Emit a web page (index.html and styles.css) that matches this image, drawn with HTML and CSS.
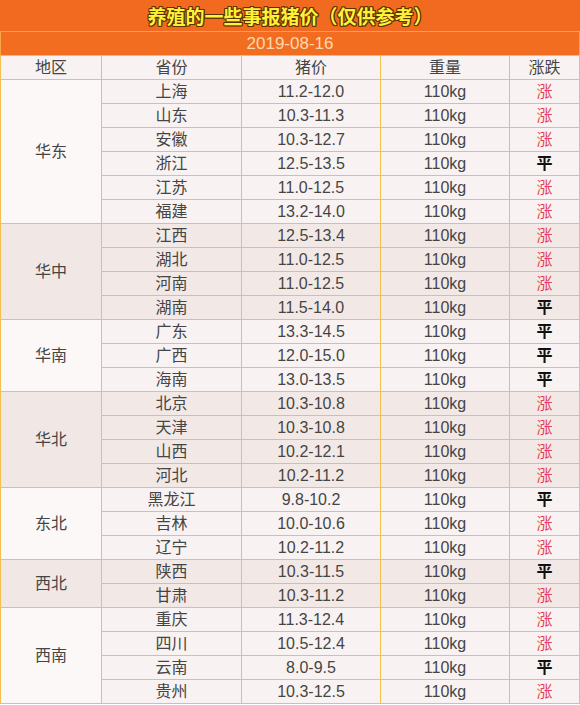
FILE: index.html
```html
<!DOCTYPE html>
<html lang="zh">
<head>
<meta charset="utf-8">
<link rel="stylesheet" href="styles.css">
</head>
<body>
<div class="page">
  <div class="title"><span>养殖的一些事报猪价（仅供参考）</span></div>
  <table class="prices">
    <colgroup>
      <col class="c1"><col class="c2"><col class="c3"><col class="c4"><col class="c5">
    </colgroup>
    <tr class="date"><td colspan="5">2019-08-16</td></tr>
    <tr class="head"><td>地区</td><td>省份</td><td>猪价</td><td>重量</td><td>涨跌</td></tr>

    <tr class="g1"><td class="region" rowspan="6">华东</td><td>上海</td><td>11.2-12.0</td><td>110kg</td><td class="up">涨</td></tr>
    <tr class="g1"><td>山东</td><td>10.3-11.3</td><td>110kg</td><td class="up">涨</td></tr>
    <tr class="g1"><td>安徽</td><td>10.3-12.7</td><td>110kg</td><td class="up">涨</td></tr>
    <tr class="g1"><td>浙江</td><td>12.5-13.5</td><td>110kg</td><td class="flat">平</td></tr>
    <tr class="g1"><td>江苏</td><td>11.0-12.5</td><td>110kg</td><td class="up">涨</td></tr>
    <tr class="g1"><td>福建</td><td>13.2-14.0</td><td>110kg</td><td class="up">涨</td></tr>

    <tr class="g2"><td class="region" rowspan="4">华中</td><td>江西</td><td>12.5-13.4</td><td>110kg</td><td class="up">涨</td></tr>
    <tr class="g2"><td>湖北</td><td>11.0-12.5</td><td>110kg</td><td class="up">涨</td></tr>
    <tr class="g2"><td>河南</td><td>11.0-12.5</td><td>110kg</td><td class="up">涨</td></tr>
    <tr class="g2"><td>湖南</td><td>11.5-14.0</td><td>110kg</td><td class="flat">平</td></tr>

    <tr class="g1"><td class="region" rowspan="3">华南</td><td>广东</td><td>13.3-14.5</td><td>110kg</td><td class="flat">平</td></tr>
    <tr class="g1"><td>广西</td><td>12.0-15.0</td><td>110kg</td><td class="flat">平</td></tr>
    <tr class="g1"><td>海南</td><td>13.0-13.5</td><td>110kg</td><td class="flat">平</td></tr>

    <tr class="g2"><td class="region" rowspan="4">华北</td><td>北京</td><td>10.3-10.8</td><td>110kg</td><td class="up">涨</td></tr>
    <tr class="g2"><td>天津</td><td>10.3-10.8</td><td>110kg</td><td class="up">涨</td></tr>
    <tr class="g2"><td>山西</td><td>10.2-12.1</td><td>110kg</td><td class="up">涨</td></tr>
    <tr class="g2"><td>河北</td><td>10.2-11.2</td><td>110kg</td><td class="up">涨</td></tr>

    <tr class="g1"><td class="region" rowspan="3">东北</td><td>黑龙江</td><td>9.8-10.2</td><td>110kg</td><td class="flat">平</td></tr>
    <tr class="g1"><td>吉林</td><td>10.0-10.6</td><td>110kg</td><td class="up">涨</td></tr>
    <tr class="g1"><td>辽宁</td><td>10.2-11.2</td><td>110kg</td><td class="up">涨</td></tr>

    <tr class="g2"><td class="region" rowspan="2">西北</td><td>陕西</td><td>10.3-11.5</td><td>110kg</td><td class="flat">平</td></tr>
    <tr class="g2"><td>甘肃</td><td>10.3-11.2</td><td>110kg</td><td class="up">涨</td></tr>

    <tr class="g1"><td class="region" rowspan="4">西南</td><td>重庆</td><td>11.3-12.4</td><td>110kg</td><td class="up">涨</td></tr>
    <tr class="g1"><td>四川</td><td>10.5-12.4</td><td>110kg</td><td class="up">涨</td></tr>
    <tr class="g1"><td>云南</td><td>8.0-9.5</td><td>110kg</td><td class="flat">平</td></tr>
    <tr class="g1"><td>贵州</td><td>10.3-12.5</td><td>110kg</td><td class="up">涨</td></tr>
  </table>
</div>
</body>
</html>
```

FILE: styles.css
```css
html, body {
  margin: 0;
  padding: 0;
  background: #ffffff;
}

.page {
  width: 580px;
  font-family: "Liberation Sans", "Noto Sans CJK SC", sans-serif;
  color: #454545;
}

.title {
  height: 31px;
  background: #f26a1f;
  display: flex;
  align-items: center;
  justify-content: center;
}

.title span {
  font-family: "Noto Sans CJK SC", sans-serif;
  font-weight: 700;
  font-size: 19px;
  line-height: 1;
  color: #fff03a;
  letter-spacing: 0;
  text-shadow:
    -1px -1px 0 #5b3300, 1px -1px 0 #5b3300,
    -1px 1px 0 #5b3300, 1px 1px 0 #5b3300,
    0 -1px 0 #5b3300, 0 1px 0 #5b3300,
    -1px 0 0 #5b3300, 1px 0 0 #5b3300;
}

.prices {
  width: 579px;
  border-collapse: collapse;
  table-layout: fixed;
  font-size: 16px;
}

.c1 { width: 101px; }
.c2 { width: 140px; }
.c3 { width: 139px; }
.c4 { width: 129px; }
.c5 { width: 70px; }

.prices td {
  border: 1px solid #f3c04e;
  height: 23px;
  padding: 0;
  text-align: center;
  vertical-align: middle;
  line-height: 22px;
}

.date td {
  background: #f36d20;
  color: #fcd9b2;
  font-size: 17px;
  border-top-color: #f8a24a;
  border-left-color: #f8a24a;
  border-right-color: #f8a24a;
}

.head td {
  background: #f8f3f2;
}

.g1 td {
  background: #f8f3f2;
}

.g2 td {
  background: #f2e9e6;
}

.g1 .region {
  background: #fbf8f7;
}

.g2 .region {
  background: #f1e8e5;
}

.up {
  color: #e4425e;
}

.flat {
  color: #111111;
  font-weight: 700;
}
```
